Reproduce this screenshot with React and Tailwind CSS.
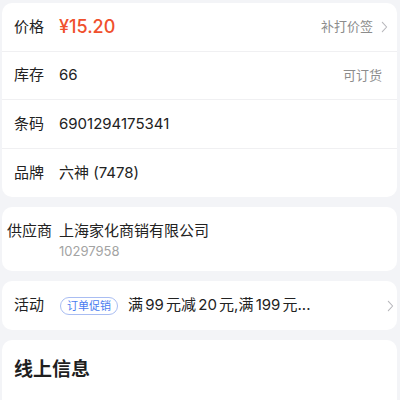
import React from "react";

const FONT = { fontFamily: 'Inter, "Noto Sans CJK SC", sans-serif' };

const Chevron = ({ className = "" }) => (
  <svg viewBox="0 0 8 14" className={className} fill="none">
    <path d="M1.5 1.5 6.5 7l-5 5.5" stroke="#b8b8bd" strokeWidth="1.3" strokeLinecap="round" strokeLinejoin="round" />
  </svg>
);

const Row = ({ label, children, right, last }) => (
  <div className={`flex items-center h-[48.5px] pl-[12px] pr-[9px] ${last ? "" : "border-b border-[#f0f0f2]"}`}>
    <span className="w-[45px] text-[15px] text-[#222]">{label}</span>
    <div className="flex-1 flex items-center">{children}</div>
    {right}
  </div>
);

const App = () => {
  return (
    <div className="w-[400px] h-[400px] overflow-hidden bg-[#f3f4f7] pt-[3px] pl-[2px] pr-[3px] flex flex-col gap-[10px]" style={FONT}>
      {/* basic info */}
      <div className="bg-white rounded-[10px]">
        <Row
          label="价格"
          right={
            <div className="flex items-center gap-[8px] text-[13px] text-[#8c8c8c]">
              补打价签
              <Chevron className="w-[7px] h-[12px]" />
            </div>
          }
        >
          <span className="text-[18px] font-medium text-[#f0502d]">¥15.20</span>
        </Row>
        <Row label="库存" right={<span className="text-[13px] text-[#8c8c8c] mr-[6px]">可订货</span>}>
          <span className="text-[15px] text-[#222]">66</span>
        </Row>
        <Row label="条码">
          <span className="text-[15px] text-[#222]">6901294175341</span>
        </Row>
        <Row label="品牌" last>
          <span className="text-[15px] text-[#222]">六神 (7478)</span>
        </Row>
      </div>

      {/* supplier */}
      <div className="bg-white rounded-[10px] h-[64px] flex px-[5px] pt-[13px]">
        <span className="w-[52px] text-[15px] leading-[22px] text-[#222]">供应商</span>
        <div className="flex flex-col">
          <span className="text-[15px] leading-[22px] text-[#222]">上海家化商销有限公司</span>
          <span className="text-[13px] leading-[18px] text-[#a3a3a3]">10297958</span>
        </div>
      </div>

      {/* activity */}
      <div className="bg-white rounded-[10px] h-[49px] flex items-center pl-[12px] pr-[3px]">
        <span className="w-[46px] text-[15px] text-[#222]">活动</span>
        <span className="h-[18px] px-[6px] rounded-full border border-[#a9bdf2] text-[11px] leading-[16px] text-[#4a7cf0]">订单促销</span>
        <span className="ml-[10px] flex-1 text-[15px] text-[#222] whitespace-nowrap [word-spacing:-2px]">满 99 元减 20 元,满 199 元...</span>
        <Chevron className="w-[7px] h-[12px]" />
      </div>

      {/* online info */}
      <div className="bg-white rounded-t-[10px] flex-1 px-[12px] pt-[16px]">
        <h2 className="text-[19px] font-bold text-[#1f1f1f]">线上信息</h2>
      </div>
    </div>
  );
};

export default App;
